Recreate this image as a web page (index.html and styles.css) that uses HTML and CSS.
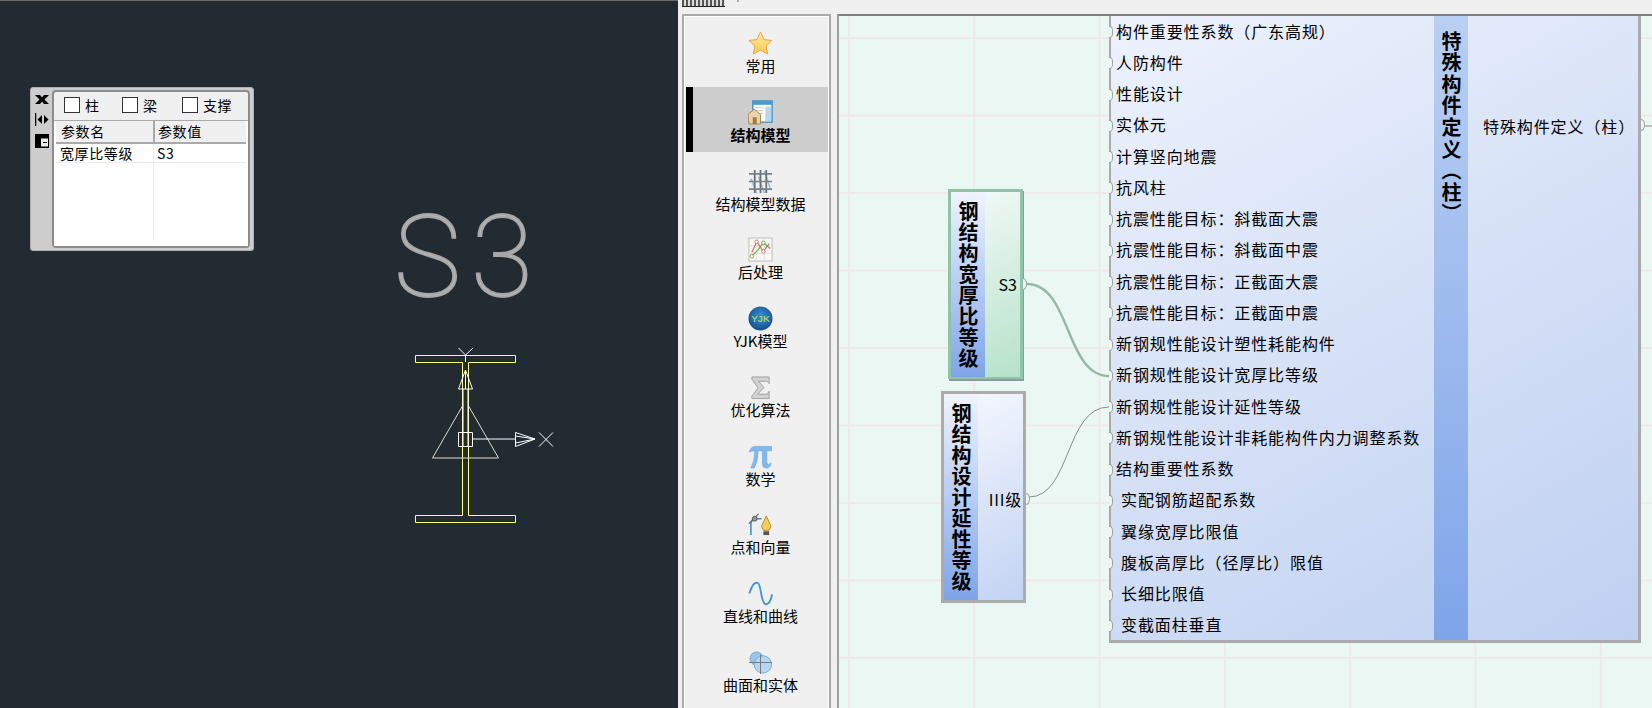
FILE: index.html
```html
<!DOCTYPE html>
<html lang="zh">
<head>
<meta charset="utf-8">
<title>结构模型</title>
<link rel="stylesheet" href="styles.css">
</head>
<body>
<div class="app">
  <section class="cad">
    <svg class="cad-art" width="678" height="708" viewBox="0 0 678 708">
      <text class="cad-text" x="394" y="296">S</text>
      <text class="cad-text" x="471" y="296">3</text>
      <path class="yel" d="M415.5 355.5H515.5V362.5H468.5V515.5H515.5V522.5H415.5V515.5H462.5V362.5H415.5Z"/>
      <path class="tri" d="M463 405L432.5 458H498.5L468 405"/>
      <g class="wht">
        <path d="M458.5 348L465.5 355L473 348M465.5 355V362"/>
        <path d="M465.5 370L458.5 389H472.5ZM463 389V432M468 389V432M465.5 370V389"/>
        <path d="M458.5 432.5H472.5V446.5H458.5ZM463 432.5V446.5M468 432.5V446.5M472.5 439H515.5"/>
        <path d="M515.5 432.5V446.5L535 439ZM515.5 436L535 439L515.5 443"/>
        <path d="M539 432.5L553 446.5M553 432.5L539 446.5"/>
      </g>
    </svg>
    <div class="popup">
      <div class="rail">
        <svg width="14" height="58" viewBox="0 0 14 58">
          <path d="M0 1H5L7 3.5L9 1H14L9.5 5.5L14 10H9L7 7.5L5 10H0L4.5 5.5Z" fill="#000"/>
          <path d="M0.5 19V32" stroke="#000" stroke-width="1.5"/>
          <path d="M7 21V30L2.5 25.5ZM9 21V30L13.5 25.5Z" fill="#000"/>
          <path d="M0 40H14V54H0Z" fill="#000"/>
          <path d="M6 44.5H13V52.5H6Z" fill="#eee"/>
          <path d="M8 48.5H12" stroke="#000"/>
        </svg>
      </div>
      <div class="panel">
        <div class="checks">
          <span class="check check-a"><i class="box"></i>柱</span>
          <span class="check check-b"><i class="box"></i>梁</span>
          <span class="check"><i class="box"></i>支撑</span>
        </div>
        <div class="tbl">
          <div class="th">参数名</div><div class="th th-r">参数值</div>
          <div class="td">宽厚比等级</div><div class="td td-r">S3</div>
          <div class="fill"></div><div class="fill fill-r"></div>
        </div>
      </div>
    </div>
  </section>

  <section class="right">
    <div class="toolbar"><span class="mini"></span><span class="dot"></span></div>
    <div class="work">
      <nav class="side">
        <a class="item">
          <svg class="ico" width="26" height="26" viewBox="0 0 26 26"><defs><linearGradient id="st" x1="0" y1="0" x2="0" y2="1"><stop offset="0" stop-color="#ffe9a6"/><stop offset="1" stop-color="#fdc850"/></linearGradient></defs><path d="M13 1L16.6 9L25 9.8L18.8 15.6L20.5 24L13 19.8L5.5 24L7.2 15.6L1 9.8L9.4 9Z" fill="url(#st)" stroke="#e2a544" stroke-width="1"/></svg>
          <span>常用</span>
        </a>
        <a class="item active">
          <svg class="ico" width="26" height="26" viewBox="0 0 26 26"><rect x="5" y="1" width="20" height="22" fill="#fff" stroke="#3d8bc4" stroke-width="1.4"/><rect x="5" y="1" width="20" height="4" fill="#4c9ad2"/><rect x="18" y="7" width="6" height="15" fill="#b7d7ec"/><path d="M8 8H16M8 11H16M8 14H16" stroke="#c8c8c8"/><path d="M0 15L6.5 9.5L13 15V25H1Z" fill="#e9d3a8" stroke="#a98552"/><path d="M5 18H9V25H5Z" fill="#9a7a4a"/></svg>
          <span>结构模型</span>
        </a>
        <a class="item">
          <svg class="ico" width="26" height="26" viewBox="0 0 26 26"><path d="M3 10L9 25M11 8L17 25M17 2L23 20" stroke="#7fb2e0" stroke-width="1.6" opacity=".8"/><path d="M7 1V25M13 1V25M19 1V25" stroke="#6e6e6e" stroke-width="1.8"/><path d="M1 5H25M1 13H25M1 21H25" stroke="#74818f" stroke-width="1.8"/></svg>
          <span>结构模型数据</span>
        </a>
        <a class="item">
          <svg class="ico" width="26" height="26" viewBox="0 0 26 26"><rect x="1" y="1" width="24" height="24" fill="#f7f7f7" stroke="#bdbdbd"/><path d="M1 9H25M1 17H25M9 1V25M17 1V25" stroke="#e2e2e2"/><path d="M4 16L9 5L16 15L22 7" fill="none" stroke="#d9756a" stroke-width="1.3"/><path d="M4 20L10 14L16 6L23 12" fill="none" stroke="#78ad45" stroke-width="1.3"/><circle cx="9" cy="5" r="1.8" fill="#fff" stroke="#d9756a"/><circle cx="16" cy="15" r="1.8" fill="#fff" stroke="#d9756a"/><circle cx="16" cy="6" r="1.8" fill="#fff" stroke="#78ad45"/><circle cx="4" cy="20" r="1.8" fill="#fff" stroke="#78ad45"/></svg>
          <span>后处理</span>
        </a>
        <a class="item">
          <svg class="ico" width="26" height="26" viewBox="0 0 26 26"><defs><radialGradient id="yj" cx=".5" cy=".4" r=".65"><stop offset="0" stop-color="#3c8fd0"/><stop offset="1" stop-color="#0d4a92"/></radialGradient></defs><circle cx="13" cy="13" r="12.5" fill="url(#yj)"/><text x="13" y="17" text-anchor="middle" class="yjk">YJK</text></svg>
          <span>YJK模型</span>
        </a>
        <a class="item">
          <svg class="ico" width="26" height="26" viewBox="0 0 26 26"><path d="M4 2H22V9L20 6.5H11L16.5 13L10 20H20L22 17V24.5H4V22L10.5 13.5L4 4.5Z" fill="#d2d2d2" stroke="#a0a0a0"/></svg>
          <span>优化算法</span>
        </a>
        <a class="item">
          <svg class="ico" width="26" height="26" viewBox="0 0 26 26"><path d="M1.5 8.5Q2.5 2.5 8 2.5H24.5V7H19.5V19Q19.5 21.5 21.5 21.5L24 19.5Q23.5 25 19 25Q15 25 15 20V7H10.5Q10.5 18 6.5 25H3Q7 18 7 7Q3.5 7 1.5 8.5Z" fill="#7fb9ef" stroke="#639fdb" stroke-width=".6"/></svg>
          <span>数学</span>
        </a>
        <a class="item">
          <svg class="ico" width="26" height="26" viewBox="0 0 26 26"><path d="M3 24V13Q3 7 9 7H14" fill="none" stroke="#3d8bc4" stroke-width="1.6"/><path d="M1 12L11 2" stroke="#6e6e6e" stroke-width="1.3"/><circle cx="7" cy="7" r="2.5" fill="#9a9a9a" stroke="#555"/><path d="M19 4L24 15L22 19H16L14 15Z" fill="#f4cd5e" stroke="#b78d2c"/><rect x="16" y="20" width="6" height="4" fill="#555"/></svg>
          <span>点和向量</span>
        </a>
        <a class="item">
          <svg class="ico" width="26" height="26" viewBox="0 0 26 26"><path d="M1.5 13C4 4 7 1 10 2C14 3 13 22 18 24C21 25 24 21 25 14" fill="none" stroke="#3f9ad0" stroke-width="2"/></svg>
          <span>直线和曲线</span>
        </a>
        <a class="item">
          <svg class="ico" width="26" height="26" viewBox="0 0 26 26"><circle cx="9" cy="9" r="7" fill="#98c6ea" stroke="#7aa9cf"/><circle cx="15.5" cy="15" r="9" fill="#b6d6f1" stroke="#7aa9cf"/><path d="M1 13H25M13 5V25" stroke="#777" stroke-width="1"/></svg>
          <span>曲面和实体</span>
        </a>
      </nav>

      <main class="canvas">
        <svg class="wires" width="813" height="692" viewBox="0 0 813 692">
          <path class="wire-a" d="M188 268C232 268 226 360 270 360"/>
          <path class="wire-b" d="M190 481C232 481 226 391 270 391"/>
          <path class="wire-b" d="M802 110H813"/>
        </svg>

        <div class="node node-green">
          <div class="strip">钢结构宽厚比等级</div>
          <div class="out"><span>S3</span><i class="grip"></i></div>
        </div>

        <div class="node node-blue">
          <div class="strip">钢结构设计延性等级</div>
          <div class="out"><span>III级</span><i class="grip"></i></div>
        </div>

        <div class="main-node">
          <ul class="inputs">
            <li>构件重要性系数（广东高规）</li>
            <li>人防构件</li>
            <li>性能设计</li>
            <li>实体元</li>
            <li>计算竖向地震</li>
            <li>抗风柱</li>
            <li>抗震性能目标：斜截面大震</li>
            <li>抗震性能目标：斜截面中震</li>
            <li>抗震性能目标：正截面大震</li>
            <li>抗震性能目标：正截面中震</li>
            <li>新钢规性能设计塑性耗能构件</li>
            <li>新钢规性能设计宽厚比等级</li>
            <li>新钢规性能设计延性等级</li>
            <li>新钢规性能设计非耗能构件内力调整系数</li>
            <li>结构重要性系数</li>
            <li class="ind">实配钢筋超配系数</li>
            <li class="ind">翼缘宽厚比限值</li>
            <li class="ind">腹板高厚比（径厚比）限值</li>
            <li class="ind">长细比限值</li>
            <li class="ind">变截面柱垂直</li>
          </ul>
          <div class="main-strip">特殊构件定义（柱）</div>
          <div class="main-out"><span>特殊构件定义（柱）</span><i class="grip"></i></div>
        </div>
      </main>
    </div>
  </section>
</div>
</body>
</html>
```

FILE: styles.css
```css
* { box-sizing: border-box; }
html, body { margin: 0; padding: 0; }
body {
  width: 1652px;
  height: 708px;
  overflow: hidden;
  background: #f0f0f0;
  color: #000;
  font-family: "Noto Sans CJK SC", "Liberation Sans", sans-serif;
}
.app { display: flex; width: 1652px; height: 708px; }

/* CAD viewport */
.cad {
  position: relative;
  width: 678px;
  height: 708px;
  flex: none;
  background: #222a32;
  border-top: 1px solid #6a6a6a;
}
.cad-art { position: absolute; left: 0; top: -1px; display: block; }
.cad-text {
  font-family: "Roboto", sans-serif;
  font-weight: 100;
  font-size: 113px;
  fill: #b4b4b4;
  stroke: #a6a6a6;
  stroke-width: 1.8px;
}
.yel { fill: none; stroke: #ffff80; stroke-width: 1; }
.tri { fill: none; stroke: #dcdccc; stroke-width: 1; }
.wht path { fill: none; stroke: #fff; stroke-width: 1; }

.popup {
  position: absolute;
  left: 30px;
  top: 86px;
  width: 224px;
  height: 164px;
  display: flex;
  background: #cdcdcd;
  border-radius: 3px;
  padding: 2px 3px 2px 0;
  border: 1px solid #b0b0b0;
}
.rail { width: 21px; flex: none; padding: 4px 0 0 4px; }
.rail svg { display: block; }
.panel {
  flex: 1;
  display: flex;
  flex-direction: column;
  background: #f0f0f0;
  border: 2px solid #8c8c8c;
  border-radius: 4px;
  padding: 0 1px 0 2px;
  font-size: 14px;
  line-height: 18px;
}
.checks { display: flex; height: 28px; flex: none; align-items: center; padding: 0 0 2px 8px; }
.check { display: flex; align-items: center; gap: 5px; letter-spacing: 0.5px; }
.check-a { width: 58px; }
.check-b { width: 60px; }
.box {
  display: block;
  width: 16px;
  height: 16px;
  border: 1px solid #333;
  background: #fff;
}
.tbl {
  flex: 1;
  display: grid;
  grid-template-columns: 97px 1fr;
  grid-template-rows: 23px 19px 1fr;
  background: #fff;
  margin: 0 -1px 0 -2px;
  padding: 0 2px;
  border-top: 1px solid #aaa;
  letter-spacing: 0.6px;
}
.th {
  background: #f0f0f0;
  padding: 1px 0 0 5px;
  border-bottom: 2px solid #aaa;
}
.th-r { border-left: 2px solid #aaa; padding-left: 3px; }
.td { padding-left: 4px; border-bottom: 1px solid #ececec; }
.td-r { border-left: 1px solid #ececec; padding-left: 3px; }
.fill-r { border-left: 1px solid #ececec; margin-bottom: 4px; }

/* right application area */
.right { flex: 1; display: flex; flex-direction: column; min-width: 0; }
.toolbar { height: 14px; flex: none; display: flex; align-items: flex-start; padding-left: 4px; }
.mini {
  display: block;
  width: 43px;
  height: 7px;
  border-bottom: 1px solid #222;
  background: repeating-linear-gradient(90deg, #555 0 2px, #ddd 2px 4px);
}
.dot { display: block; width: 2px; height: 2px; margin-left: 12px; background: #aaa; }
.work { flex: 1; display: flex; min-height: 0; }

.side {
  width: 149px;
  flex: none;
  margin-left: 4px;
  border: 2px solid #aaa;
  border-bottom: none;
  box-shadow: inset 1px 1px 0 #fff, inset -1px 0 0 #fff;
  padding: 2px 1px 0 2px;
  display: flex;
  flex-direction: column;
  gap: 3.75px;
  overflow: hidden;
}
.item {
  height: 65px;
  flex: none;
  display: flex;
  flex-direction: column;
  align-items: center;
  padding: 13px 0 0 7px;
  font-size: 15px;
  line-height: 20px;
}
.item.active {
  background: #cdcdcd;
  box-shadow: inset 7px 0 0 #000;
  font-weight: 700;
}
.ico { display: block; width: 25px; height: 25px; flex: none; }
.yjk {
  font: 700 10px "Liberation Sans", sans-serif;
  fill: #9fd46a;
}

/* node canvas */
.canvas {
  flex: 1;
  position: relative;
  margin-left: 6px;
  border-top: 2px solid #808080;
  border-left: 2px solid #a0a0a0;
  background-color: #ebf7f3;
  background-image:
    linear-gradient(90deg, #f1e9e9 2px, transparent 2px),
    linear-gradient(180deg, #f1e9e9 2px, transparent 2px);
  background-size: 125.3px 77.5px;
  background-position: 9px 21px;
  overflow: hidden;
}
.wires { position: absolute; left: 0; top: 0; }
.wire-a { fill: none; stroke: #96b8a6; stroke-width: 2.5; }
.wire-b { fill: none; stroke: #8a8a8a; stroke-width: 1; }

.node {
  position: absolute;
  display: flex;
  box-shadow: 1px 2px 0 #8a9aa0;
}
.node-green {
  left: 109px;
  top: 173px;
  width: 75px;
  height: 190px;
  border: 3px solid #8fc4a8;
  border-bottom-width: 2px;
  background: linear-gradient(150deg, #f6fbfa, #b5e2c9);
}
.node-blue {
  left: 102px;
  top: 375px;
  width: 85px;
  height: 212px;
  border: 3px solid #ababab;
  box-shadow: none;
  background: linear-gradient(150deg, #f7f9ff, #c2d3f3);
}
.strip {
  width: 34px;
  flex: none;
  display: flex;
  align-items: center;
  justify-content: center;
  writing-mode: vertical-rl;
  text-orientation: upright;
  font-weight: 700;
  font-size: 20px;
  line-height: 34px;
  letter-spacing: 1px;
  background: linear-gradient(180deg, #f0f4fd, #7ea4e9);
}
.out {
  flex: 1;
  position: relative;
  display: flex;
  justify-content: flex-end;
  font-size: 16px;
  line-height: 24px;
}
.node-green .out { padding: 80px 3px 0 0; }
.node-blue .out { padding: 93px 1px 0 0; white-space: nowrap; letter-spacing: 0.8px; }
.grip {
  position: absolute;
  right: -7px;
  width: 4px;
  height: 12px;
  border: 1px solid #a0a0a0;
  border-left: none;
  border-radius: 0 4px 4px 0 / 0 6px 6px 0;
  background: #ebf7f3;
}
.node-green .grip { top: 86px; }
.node-blue .grip { top: 99px; }

.main-node {
  position: absolute;
  left: 270px;
  top: 0;
  width: 532px;
  height: 627px;
  display: flex;
  border-left: 2px solid #aaa;
  border-right: 3px solid #aaa;
  border-bottom: 3px solid #aaa;
  background: linear-gradient(150deg, #edf2fd, #bfd0f1);
}
.inputs {
  list-style: none;
  margin: -1px 0 0;
  padding: 0;
  width: 323px;
  flex: none;
  display: grid;
  grid-auto-rows: 31.26px;
  font-size: 16px;
  letter-spacing: 0.9px;
}
.inputs li {
  position: relative;
  display: flex;
  align-items: center;
  padding-left: 5px;
  white-space: nowrap;
}
.inputs li::before {
  content: "";
  position: absolute;
  left: -2px;
  top: 11px;
  width: 3px;
  height: 10px;
  border: 1px solid #a0a0a0;
  border-left: none;
  border-radius: 0 3px 3px 0 / 0 5px 5px 0;
  background: #ebf7f3;
}
.inputs .ind { padding-left: 10px; }
.main-strip {
  width: 34px;
  flex: none;
  display: flex;
  justify-content: flex-start;
  align-items: center;
  padding-top: 15px;
  writing-mode: vertical-rl;
  text-orientation: upright;
  font-weight: 700;
  font-size: 20px;
  line-height: 34px;
  letter-spacing: 1.6px;
  background: linear-gradient(180deg, #b9cff3, #7fa5e9);
}
.main-out {
  flex: 1;
  position: relative;
  padding: 98px 0 0 15px;
  font-size: 16px;
  letter-spacing: 0.9px;
  line-height: 24px;
  white-space: nowrap;
}
.main-out .grip { top: 103px; right: -7px; }
```
